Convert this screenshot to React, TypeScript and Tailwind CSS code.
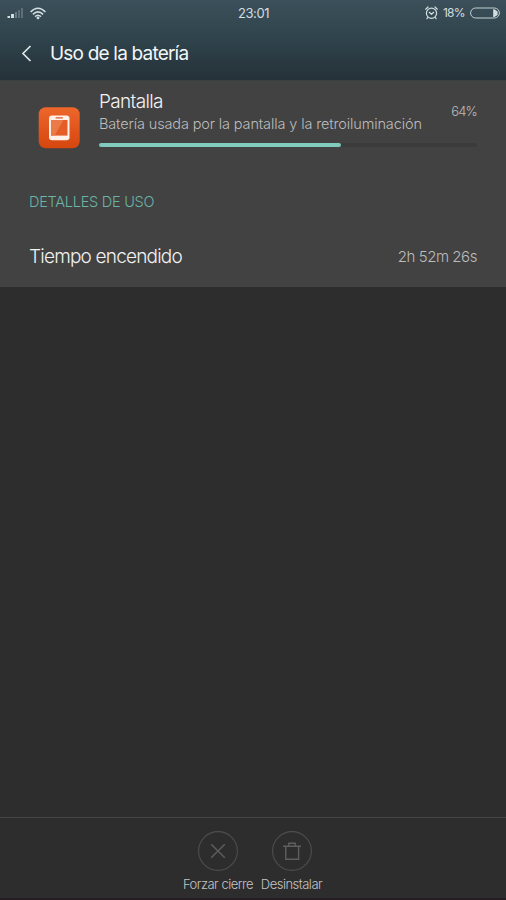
import type { ReactNode } from 'react';

function StatusBar() {
  return (
    <div className="grid h-[26px] grid-cols-3 items-center pr-[6px] pl-[7px] text-[#d3dee0]">
      <div className="flex items-center gap-[6px]">
        <svg width="17" height="12" viewBox="0 0 17 12">
          <rect x="0.5" y="9" width="2.5" height="2" fill="#d3dee0" />
          <rect x="4" y="7" width="3" height="4" fill="#d3dee0" />
          <rect x="8" y="5" width="2" height="6" fill="#687b82" />
          <rect x="11" y="3" width="2" height="8" fill="#5d7078" />
          <rect x="14" y="1" width="2" height="10" fill="#5d7078" />
        </svg>
        <svg width="16" height="13" viewBox="0 0 16 13" fill="none" stroke="#d3dee0" strokeWidth="1.6">
          <path d="M0.6 5Q8-2.4 15.4 5" />
          <path d="M2.9 7.3Q8 2.4 13.1 7.3" />
          <path d="M5.1 9.6Q8 6.9 10.9 9.6" />
          <circle cx="8" cy="10.9" r="1.4" fill="#d3dee0" stroke="none" />
        </svg>
      </div>
      <span className="text-center text-[13px] leading-none tracking-[-0.4px]">23:01</span>
      <div className="flex items-center justify-end">
        <svg width="13" height="14" viewBox="0 0 13 14" fill="none" stroke="#d3dee0" strokeWidth="1.2" strokeLinecap="round" strokeLinejoin="round">
          <circle cx="6.5" cy="7.2" r="5.1" />
          <path d="M4.3 6.3l2.2 2 2.2-2M0.7 3.2L3 1M12.3 3.2L10 1M2.8 11.5l-.9 1.2M10.2 11.5l.9 1.2" />
        </svg>
        <span className="ml-[5px] w-[22px] text-[12px] leading-none tracking-[-0.8px] whitespace-nowrap">18%</span>
        <svg className="ml-[5px]" width="30" height="12" viewBox="0 0 30 12">
          <rect x="0.6" y="1" width="28.8" height="10" rx="5" fill="none" stroke="#c3d0d3" />
          <path d="M23.2 2.2h1.2L27.6 4.5v3.4L24.4 10h-1.2z" fill="#d3dee0" />
        </svg>
      </div>
    </div>
  );
}

function PhoneIcon() {
  return (
    <svg width="42" height="42" viewBox="0 0 42 42">
      <defs>
        <linearGradient id="tile" x1="0" y1="0" x2="0" y2="1">
          <stop offset="0" stopColor="#ed672b" />
          <stop offset="1" stopColor="#d6460f" />
        </linearGradient>
      </defs>
      <rect x="0.7" y="0.3" width="41" height="41" rx="7" fill="url(#tile)" />
      <rect x="11" y="8.5" width="20.5" height="24.7" rx="3" fill="#fff0e8" />
      <rect x="13" y="13" width="16.5" height="15.6" fill="#e55c26" />
      <path d="M13 13h12.5L16.5 28.6H13z" fill="#ec7a48" />
      <rect x="17.5" y="10.2" width="7.5" height="1.4" rx="0.7" fill="#d95b2c" />
    </svg>
  );
}

function FooterAction({ label, children, className }: { label: string; children: ReactNode; className: string }) {
  return (
    <button className={`flex flex-col items-center ${className}`}>
      <svg width="40" height="40" viewBox="0 0 40 40" fill="none" stroke="#4e4e4e" strokeWidth="1.1">
        <circle cx="20" cy="20" r="19.4" />
        {children}
      </svg>
      <span className="mt-[5px] text-[13px] leading-4 font-light tracking-[-0.5px] whitespace-nowrap text-[#c4c4c4]">{label}</span>
    </button>
  );
}

export default function App() {
  return (
    <div className="flex h-[900px] w-[506px] flex-col overflow-hidden bg-[#2d2d2d] font-['Inter',sans-serif]">
      <header className="h-20 shrink-0 bg-linear-to-b from-[#3b505a] via-[#2f434c] to-[#253138]">
        <StatusBar />
        <div className="flex h-[54px] items-center pl-[21px]">
          <svg width="11" height="17" viewBox="0 0 11 17" fill="none" stroke="#dce5e7" strokeWidth="1.7">
            <path d="M9.5 1L2 8.5 9.5 16" />
          </svg>
          <h1 className="mt-[2px] ml-[18px] text-[19px] leading-6 tracking-[-0.8px] text-[#f2f7f8]">Uso de la batería</h1>
        </div>
      </header>

      <main className="h-[207px] shrink-0 border-t border-[#3b4142] bg-[#424242] pr-[29px] pl-[29px]">
        <div className="flex h-[93px] pt-[26px] pl-[9px]">
          <PhoneIcon />
          <div className="-mt-[17px] ml-[19px] flex-1">
            <div className="flex justify-between">
              <div>
                <h2 className="h-[23px] text-[19px] leading-6 font-light tracking-[-0.65px] text-[#f2f2f2]">Pantalla</h2>
                <p className="h-[22px] text-[14.5px] leading-[22px] font-light tracking-[-0.13px] whitespace-nowrap text-[#bcbcbc]">Batería usada por la pantalla y la retroiluminación</p>
              </div>
              <span className="mt-[11px] text-[13px] leading-5 font-light tracking-[-0.8px] text-[#bcbcbc]">64%</span>
            </div>
            <div className="mt-2 h-1 rounded-full bg-[#3b3b3b]">
              <div className="h-1 w-[64%] rounded-full bg-[#81cabd]" />
            </div>
          </div>
        </div>
        <h3 className="mt-[18px] h-5 text-[14.5px] leading-5 font-light tracking-[-0.25px] text-[#6ab5a7]">DETALLES DE USO</h3>
        <div className="mt-[33px] flex h-6 items-center justify-between">
          <span className="text-[19px] leading-6 font-light tracking-[-0.8px] text-[#f2f2f2]">Tiempo encendido</span>
          <span className="text-[15px] leading-6 font-light tracking-[-0.45px] text-[#bcbcbc]">2h 52m 26s</span>
        </div>
      </main>

      <footer className="mt-auto flex h-[83px] border-t border-b-2 border-t-[#464646] border-b-[#261d23] pt-[13px] pl-[181px]">
        <FooterAction label="Forzar cierre" className="w-[74px]">
          <path d="M13.2 13.2l13.6 13.6M26.8 13.2L13.2 26.8" stroke="#5e5e5e" strokeWidth="1.4" />
        </FooterAction>
        <FooterAction label="Desinstalar" className="w-[73px]">
          <path d="M11 15.3h18M13.8 15.5v12.8h12.8V15.5M16.8 15v-2.7h6.4v2.7" stroke="#5e5e5e" strokeWidth="1.4" />
        </FooterAction>
      </footer>
    </div>
  );
}
